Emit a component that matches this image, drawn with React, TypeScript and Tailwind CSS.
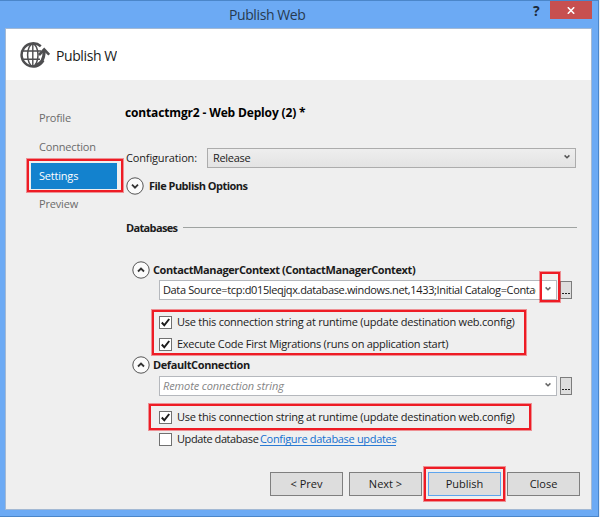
import type { ReactNode } from "react";

const SANS = "font-['Open_Sans','Noto_Sans',sans-serif]";
const MARK = "border-2 border-[#ee1c25] shadow-[0_0_0_1px_rgba(238,28,37,0.45)]";

function Chevron({ className }: { className: string }) {
  return (
    <svg viewBox="0 0 8 6" className={className} fill="none" stroke="currentColor" strokeWidth="1.5">
      <path d="M1.6 1.4 4 3.8 6.4 1.4" />
    </svg>
  );
}

function Expander({ open }: { open?: boolean }) {
  return (
    <svg viewBox="0 0 18 18" className="h-[18px] w-[18px] shrink-0" fill="none">
      <circle cx="9" cy="9" r="8.2" fill="#fbfbfb" stroke="#555" strokeWidth="1" />
      <path d={open ? "M6 10.5 9 7.5 12 10.5" : "M6 7.7 9 10.7 12 7.7"} stroke="#333" strokeWidth="1.8" />
    </svg>
  );
}

function CheckRow({ checked, children }: { checked?: boolean; children: ReactNode }) {
  return (
    <div className="flex h-[14px] items-center">
      <span className="flex h-[13px] w-[13px] shrink-0 items-center justify-center border border-[#707070] bg-white">
        {checked && (
          <svg viewBox="0 0 11 11" className="h-[11px] w-[11px]" fill="none" stroke="#1c1c1c" strokeWidth="2">
            <path d="M1.8 5.5 4.3 8.3 9.2 2" />
          </svg>
        )}
      </span>
      <span className="-mt-px ml-[5px] flex items-center whitespace-nowrap">{children}</span>
    </div>
  );
}

function ConnectionField({ children, marked }: { children: ReactNode; marked?: boolean }) {
  return (
    <div className="flex items-center">
      <div className="relative flex h-[20px] w-[398px] items-center border border-[#b5b8bd] bg-white">
        <div className="w-[376px] overflow-hidden whitespace-nowrap">{children}</div>
        <Chevron className="mb-0.5 ml-[8px] h-[6px] w-[8px] text-[#666]" />
        {marked && <div className={`absolute -top-[9px] right-[-4px] h-[30px] w-[20px] ${MARK}`} />}
      </div>
      <div className="ml-[3px] flex h-[18px] w-[12px] items-end justify-center gap-px border border-[#7c7c7c] bg-[#dedede] pb-[4px]">
        <i className="h-[1.5px] w-[2px] bg-[#222]" />
        <i className="h-[1.5px] w-[2px] bg-[#222]" />
        <i className="h-[1.5px] w-[2px] bg-[#222]" />
      </div>
    </div>
  );
}

function NavItem({ label }: { label: string }) {
  return <div className="flex h-[29px] items-center pl-[13px] tracking-[-0.18px] text-[#6b6b6b]">{label}</div>;
}

function DialogButton({ children, primary }: { children: ReactNode; primary?: boolean }) {
  return (
    <button
      className={`relative flex h-[24px] w-[73px] items-center justify-center border pb-px ${
        primary ? "border-[#5ea5ee] bg-[#dddddd]" : "border-[#7f7f7f] bg-[#dddddd]"
      }`}
    >
      {children}
      {primary && <span className={`absolute -inset-x-[5px] -top-[6px] -bottom-[6px] ${MARK}`} />}
    </button>
  );
}

export default function App() {
  return (
    <div className={`flex h-[517px] w-[600px] bg-[#e9eef4] text-[11px] leading-[14px] text-[#1b1b1b] ${SANS}`}>
      <div className="flex h-[517px] w-[599px] flex-col border-t border-r border-b border-[#4b86c9] bg-[#6caaf4] pr-[6px] pb-[6px] pl-[5px]">
        <header className="flex h-[27px] shrink-0 pl-[224px]">
          <span className="w-[305px] pt-[5px] text-[14px] leading-[17px] tracking-[-0.4px] text-[#273a50]">Publish Web</span>
          <span className="w-[17px] pt-[1px] text-[14px] leading-[17px] font-bold text-[#1c2a3a]">?</span>
          <span className="flex h-[18px] w-[42px] shrink-0 items-center justify-center bg-[#c75050]">
            <svg viewBox="0 0 8 7" className="h-[7px] w-[8px]" stroke="white" strokeWidth="1.6">
              <path d="M.8.3 7.2 6.7M7.2.3.8 6.7" />
            </svg>
          </span>
        </header>

        <div className="flex min-h-0 w-[587px] grow flex-col border border-[#a3b9d4] bg-[#efefef]">
          <div className="flex h-[51px] shrink-0 items-center bg-white pl-[14px]">
            <svg viewBox="0 0 30 28" className="h-[28px] w-[30px]" fill="none" stroke="#4e4e50">
              <path d="M20.8 5.2A11.6 11.6 0 1 0 23.4 19.5" strokeWidth="2.5" />
              <path d="M3 10H21M3 18.2H20M12.8 3V25" strokeWidth="1.4" />
              <ellipse cx="12.8" cy="14" rx="5.2" ry="11" strokeWidth="1.5" />
              <path d="M15.5 24.5C21 23 24.2 18 24.2 9.5" strokeWidth="3" />
              <path d="M19 14 24.2 8.5 29.2 13.7" strokeWidth="2.6" />
            </svg>
            <span className="mt-0.5 ml-[6px] w-[61px] overflow-hidden text-[14px] leading-[20px] tracking-[-0.4px] whitespace-nowrap">
              Publish Web
            </span>
          </div>

          <div className="flex min-h-0 grow">
            <nav className="flex w-[98px] shrink-0 flex-col pt-[23px] pl-[20px]">
              <NavItem label="Profile" />
              <NavItem label="Connection" />
              <div className={`-mt-[2px] ml-px h-[33px] w-[96px] p-[2px] pl-[2px] ${MARK}`}>
                <div className="flex h-[26px] w-[86px] items-center bg-[#1382ce] pb-px pl-[8px] tracking-[-0.2px] text-white">
                  Settings
                </div>
              </div>
              <div className="-mt-[3px]">
                <NavItem label="Preview" />
              </div>
            </nav>

            <main className="flex min-w-0 grow flex-col pl-[21px]">
              <h1 className="mt-[26px] text-[12px] leading-[14px] font-bold tracking-[-0.15px] whitespace-nowrap text-black">
                contactmgr2 - Web Deploy (2) *
              </h1>
              <div className="mt-[28px] flex items-center pl-px">
                <span className="w-[81px] tracking-[-0.15px]">Configuration:</span>
                <div className="flex h-[20px] w-[369px] items-center justify-between border border-[#acacac] bg-gradient-to-b from-[#eeeeee] to-[#e3e3e3] pr-1 pl-[5px]">
                  <span className="tracking-[-0.3px]">Release</span>
                  <Chevron className="mb-0.5 h-[6px] w-[8px] text-[#555]" />
                </div>
              </div>
              <div className="mt-[9px] flex items-center pl-px">
                <Expander />
                <span className="ml-[5px] font-bold tracking-[-0.52px]">File Publish Options</span>
              </div>
              <div className="mt-[26px] flex items-center pl-px">
                <span className="w-[57px] font-bold tracking-[-0.65px]">Databases</span>
                <div className="-mt-px h-px w-[394px] bg-[#9fa3a1]" />
              </div>

              <section className="mt-[26px] pl-[7px]">
                <div className="flex items-center">
                  <Expander open />
                  <span className="ml-[3px] font-bold tracking-[-0.4px]">ContactManagerContext (ContactManagerContext)</span>
                </div>
                <div className="mt-px pl-[27px]">
                  <ConnectionField marked>
                    <span className="pl-[3px] tracking-[-0.36px]">
                      Data Source=tcp:d015leqjqx.database.windows.net,1433;Initial Catalog=ContactManager
                    </span>
                  </ConnectionField>
                </div>
                <div className={`mt-[10px] ml-[20px] flex h-[45px] w-[374px] flex-col gap-[8px] pt-[3px] pl-[5px] ${MARK}`}>
                  <CheckRow checked>
                    <span className="tracking-[-0.24px]">Use this connection string at runtime (update destination web.config)</span>
                  </CheckRow>
                  <CheckRow checked>
                    <span className="tracking-[-0.27px]">Execute Code First Migrations (runs on application start)</span>
                  </CheckRow>
                </div>
              </section>

              <section className="mt-px pl-[7px]">
                <div className="flex items-center">
                  <Expander open />
                  <span className="ml-[3px] font-bold tracking-[-0.4px]">DefaultConnection</span>
                </div>
                <div className="mt-[2px] pl-[27px]">
                  <ConnectionField>
                    <span className="pl-[3px] tracking-[-0.1px] text-[#858585] italic">Remote connection string</span>
                  </ConnectionField>
                </div>
                <div className={`mt-[8px] ml-[17px] flex h-[26px] w-[382px] flex-col pt-[4px] pl-[8px] ${MARK}`}>
                  <CheckRow checked>
                    <span className="tracking-[-0.24px]">Use this connection string at runtime (update destination web.config)</span>
                  </CheckRow>
                </div>
                <div className="mt-[2px] pl-[27px]">
                  <CheckRow>
                    <span className="w-[83px] tracking-[-0.42px]">Update database</span>
                    <a className="mt-px border-b border-[#2a7bd4] leading-[13px] tracking-[-0.32px] text-[#146fd0]">Configure database updates</a>
                  </CheckRow>
                </div>
              </section>

              <footer className="mt-[26px] flex gap-[6px] pl-[145px]">
                <DialogButton>&lt; Prev</DialogButton>
                <DialogButton>Next &gt;</DialogButton>
                <DialogButton primary>Publish</DialogButton>
                <DialogButton>Close</DialogButton>
              </footer>
            </main>
          </div>
        </div>
      </div>
    </div>
  );
}
